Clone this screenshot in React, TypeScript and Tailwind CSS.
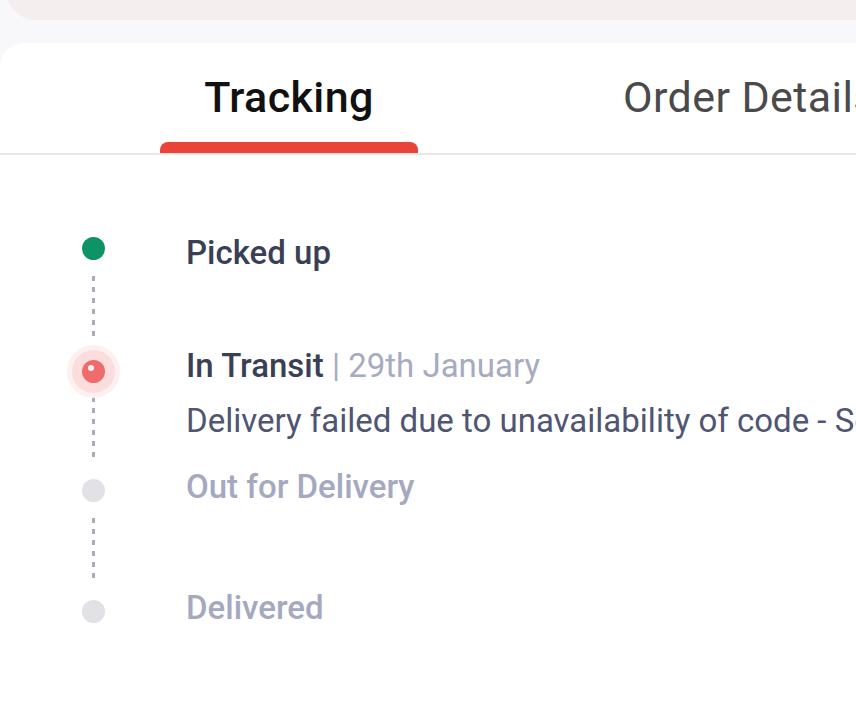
import React from "react";

function Dashes() {
  return (
    <div className="flex h-[60px] flex-col items-center gap-[6px]">
      {[0, 1, 2, 3, 4, 5].map((i) => (
        <div key={i} className="h-[5px] w-[3px] bg-[#a9abb9]" />
      ))}
    </div>
  );
}

export default function App() {
  return (
    <div
      className="h-[708px] w-[856px] overflow-hidden bg-[#f8f8fa]"
      style={{ fontFamily: "Roboto, 'Noto Sans', sans-serif" }}
    >
      {/* top card */}
      <div className="-mt-[40px] ml-[6px] h-[60px] rounded-bl-[30px] bg-[#f4eeee]" />

      {/* main card */}
      <div className="mt-[23px] h-[700px] rounded-tl-[24px] bg-white">
        {/* tabs */}
        <div className="flex border-b-2 border-[#e8e8e8]">
          <div className="ml-[160px] flex w-[258px] shrink-0 flex-col items-center pt-[30px]">
            <span className="text-[43px] font-medium leading-[49px] tracking-[0.4px] text-[#111111]">
              Tracking
            </span>
            <div className="mt-[20px] h-[11px] w-full rounded-t-[8px] bg-[#e9433a]" />
          </div>
          <div className="ml-[205px] shrink-0 pt-[30px]">
            <span className="whitespace-nowrap text-[43px] font-normal leading-[49px] tracking-[0.4px] text-[#4a4a4a]">
              Order Details
            </span>
          </div>
        </div>

        {/* timeline */}
        <div className="pl-[68px] pt-[79px]">
          {/* Picked up */}
          <div className="flex">
            <div className="flex w-[51px] shrink-0 flex-col items-center pb-[11px]">
              <div className="mt-[3px] h-[23px] w-[23px] rounded-full bg-[#0e9367]" />
              <div className="mt-[16px]">
                <Dashes />
              </div>
            </div>
            <div className="ml-[67px]">
              <div className="text-[33px] font-medium leading-[38px] text-[#3b3f56]">
                Picked up
              </div>
            </div>
          </div>

          {/* In Transit */}
          <div className="flex">
            <div className="flex w-[51px] shrink-0 flex-col items-center pb-[11px]">
              <div className="relative mt-[13px] h-[23px] w-[23px]">
                <div className="absolute -left-[15px] -top-[15px] h-[53px] w-[53px] rounded-full bg-[#fdf0f0]" />
                <div className="absolute -left-[10px] -top-[10px] h-[43px] w-[43px] rounded-full bg-[#fcdddd]" />
                <div className="absolute inset-0 rounded-full bg-[#f06b6b]" />
                <div className="absolute left-[6px] top-[5px] h-[6px] w-[6px] rounded-full bg-[#fff4f4]" />
              </div>
              <div className="mt-[14px]">
                <Dashes />
              </div>
            </div>
            <div className="ml-[67px]">
              <div className="whitespace-nowrap text-[33px] leading-[38px]">
                <span className="font-medium text-[#3b3f56]">In Transit</span>
                <span className="font-normal text-[#a7abbf]"> | 29th January</span>
              </div>
              <div className="mt-[17px] whitespace-nowrap text-[33px] font-normal leading-[38px] text-[#4f5572]">
                Delivery failed due to unavailability of code - Sent
              </div>
            </div>
          </div>

          {/* Out for Delivery */}
          <div className="flex">
            <div className="flex w-[51px] shrink-0 flex-col items-center pb-[11px]">
              <div className="mt-[11px] h-[23px] w-[23px] rounded-full bg-[#e2e2e6]" />
              <div className="mt-[16px]">
                <Dashes />
              </div>
            </div>
            <div className="ml-[67px]">
              <div className="text-[33px] font-medium leading-[38px] text-[#a5a9bf]">
                Out for Delivery
              </div>
            </div>
          </div>

          {/* Delivered */}
          <div className="flex">
            <div className="flex w-[51px] shrink-0 flex-col items-center">
              <div className="mt-[11px] h-[23px] w-[23px] rounded-full bg-[#e2e2e6]" />
            </div>
            <div className="ml-[67px]">
              <div className="text-[33px] font-medium leading-[38px] text-[#a5a9bf]">
                Delivered
              </div>
            </div>
          </div>
        </div>
      </div>
    </div>
  );
}
